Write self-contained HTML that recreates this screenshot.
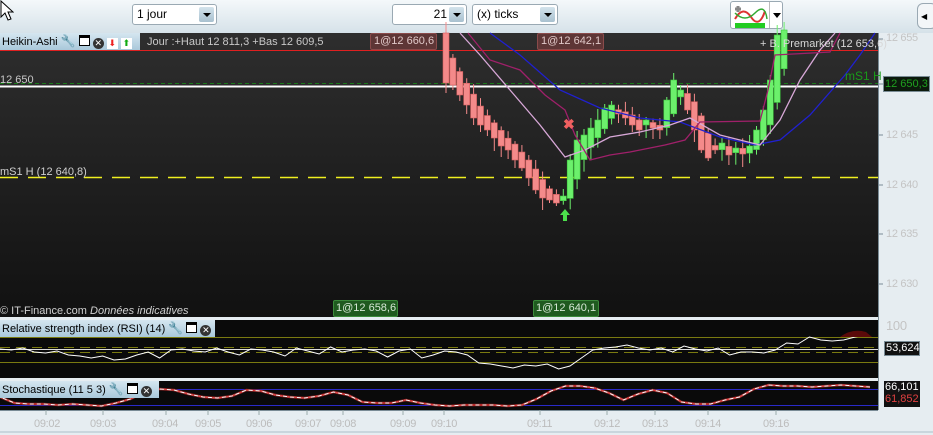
<!DOCTYPE html>
<html><head><meta charset="utf-8"><style>
*{margin:0;padding:0;box-sizing:border-box}
body{width:933px;height:435px;overflow:hidden;background:#e6edf1;font-family:"Liberation Sans",sans-serif;position:relative}
.tb{position:absolute;left:0;top:0;width:933px;height:33px;background:linear-gradient(#f4f8fa,#d6e2e9)}
.dd{position:absolute;height:21px;background:#fff;border:1px solid #9aa9b3;border-radius:3px;font-size:12px;line-height:19px;padding-left:4px;color:#000}
.dd b{position:absolute;right:2px;top:2px;width:15px;height:15px;background:linear-gradient(#d3e3ec,#a9c1cf);border-radius:2px}
.dd b:after{content:"";position:absolute;left:4px;top:6px;border-left:4px solid transparent;border-right:4px solid transparent;border-top:4px solid #000}
.t{position:absolute;white-space:nowrap;font-size:11px}
.lbl{position:absolute;background:linear-gradient(#d5e6f0,#a9c8da);color:#000;font-size:11px;line-height:16px;padding-left:2px;white-space:nowrap}
.ax{position:absolute;font-size:11px;color:#c4c4c4;letter-spacing:-0.3px}
.tm{position:absolute;top:418px;font-size:11px;color:#bcbcbc;letter-spacing:-0.3px}
</style></head><body>
<div class="tb"></div>
<svg style="position:absolute;left:0;top:0" width="14" height="22"><path d="M1 1 L1 17 L5 13 L8 20 L11 19 L8 12 L13 12 Z" fill="#fff" stroke="#000" stroke-width="1"/></svg>
<div class="dd" style="left:132px;top:4px;width:85px">1 jour<b></b></div>
<div class="dd" style="left:392px;top:4px;width:75px;text-align:right;padding-right:19px">21<b></b></div>
<div class="dd" style="left:472px;top:4px;width:86px">(x) ticks<b></b></div>
<div style="position:absolute;left:730px;top:1px;width:53px;height:28px;background:#fff;border:1px solid #9aa9b3;border-radius:3px">
<svg width="36" height="26" style="position:absolute;left:2px;top:1px"><rect x="2" y="20" width="30" height="5" fill="#2c2"/><path d="M2 16 Q10 2 18 14 T32 8" stroke="#d33" fill="none" stroke-width="2"/><path d="M2 10 Q12 20 22 10 T34 16" stroke="#3a3" fill="none" stroke-width="1.5"/><path d="M2 6 h6 M5 3 v6" stroke="#888" stroke-width="3"/></svg>
<div style="position:absolute;left:38px;top:0;width:1px;height:26px;background:#bbb"></div>
<div style="position:absolute;left:42px;top:11px;border-left:4px solid transparent;border-right:4px solid transparent;border-top:5px solid #000"></div></div>
<div style="position:absolute;left:917px;top:3px;width:20px;height:26px;background:#f3f6f8;border:1px solid #9aa9b3;border-radius:6px"><span style="position:absolute;left:3px;top:8px;font-size:8px">◀</span></div>

<div style="position:absolute;left:0;top:33px;width:878px;height:284px;background:linear-gradient(#2e2e2e,#111)"></div>
<div style="position:absolute;left:0;top:320px;width:878px;height:58px;background:#0a0a0a"></div>
<div style="position:absolute;left:0;top:381px;width:878px;height:29px;background:#0a0a0a"></div>
<div style="position:absolute;left:878px;top:33px;width:1px;height:377px;background:#7a8c96"></div>
<div style="position:absolute;left:0;top:410px;width:878px;height:1px;background:#7a8c96"></div>
<div style="position:absolute;left:0;top:431px;width:933px;height:2px;background:#c9d6dd"></div>

<svg id="s" width="933" height="435" style="position:absolute;left:0;top:0"></svg>

<div class="lbl" style="left:0;top:33px;width:140px">Heikin-Ashi <span style="font-size:12px">🔧</span>
<span style="display:inline-block;width:11px;height:11px;background:#fff;border:1px solid #000;border-top:3px solid #000;vertical-align:-1px"></span>
<span style="display:inline-block;width:11px;height:11px;background:#333;border-radius:50%;color:#fff;font-size:9px;line-height:11px;text-align:center;vertical-align:-1px">✕</span>
<span style="display:inline-block;width:11px;height:11px;background:#fff;color:#e22;font-size:9px;line-height:11px;text-align:center;vertical-align:-1px">⬇</span>
<span style="display:inline-block;width:11px;height:11px;background:#fff;color:#1a1;font-size:9px;line-height:11px;text-align:center;vertical-align:-1px">⬆</span></div>
<div class="t" style="left:147px;top:36px;color:#c8c8c8;font-size:11px">Jour :+Haut 12 811,3 +Bas 12 609,5</div>
<div class="t" style="left:370px;top:33px;width:67px;height:17px;background:#5e3636;border:1px solid #8a4b4b;border-radius:2px;color:#e0c8c8;line-height:15px;padding-left:3px">1@12 660,6</div>
<div class="t" style="left:537px;top:33px;width:67px;height:17px;background:#5e3636;border:1px solid #8a4b4b;border-radius:2px;color:#e0c8c8;line-height:15px;padding-left:3px">1@12 642,1</div>
<div class="t" style="left:760px;top:38px;color:#d8d8d8">+ B. Premarket (12 653,6)</div>
<div class="t" style="left:0;top:74px;color:#c8c8c8">12 650</div>
<div class="t" style="left:845px;top:69px;color:#1a9a1a;font-size:12px">mS1 H</div>
<div class="t" style="left:0;top:166px;color:#d0d0d0">mS1 H (12 640,8)</div>
<div class="t" style="left:0;top:305px;color:#d0d0d0">© IT-Finance.com <i>Données indicatives</i></div>
<div class="t" style="left:333px;top:300px;width:65px;height:17px;background:#1f5a1f;border:1px solid #3a8a3a;border-radius:2px;color:#d6e8d6;line-height:15px;padding-left:2px">1@12 658,6</div>
<div class="t" style="left:533px;top:300px;width:66px;height:17px;background:#1f5a1f;border:1px solid #3a8a3a;border-radius:2px;color:#d6e8d6;line-height:15px;padding-left:2px">1@12 640,1</div>

<div class="lbl" style="left:0;top:320px;width:215px">Relative strength index (RSI) (14) <span style="font-size:12px">🔧</span> <span style="display:inline-block;width:11px;height:11px;background:#fff;border:1px solid #000;border-top:3px solid #000;vertical-align:-1px"></span> <span style="display:inline-block;width:11px;height:11px;background:#333;border-radius:50%;color:#fff;font-size:9px;line-height:11px;text-align:center;vertical-align:-1px">✕</span></div>
<div class="lbl" style="left:0;top:381px;width:159px">Stochastique (11 5 3) <span style="font-size:12px">🔧</span> <span style="display:inline-block;width:11px;height:11px;background:#fff;border:1px solid #000;border-top:3px solid #000;vertical-align:-1px"></span> <span style="display:inline-block;width:11px;height:11px;background:#333;border-radius:50%;color:#fff;font-size:9px;line-height:11px;text-align:center;vertical-align:-1px">✕</span></div>

<div class="ax" style="left:886px;top:32px">12 655</div>
<div class="ax" style="left:886px;top:129px">12 645</div>
<div class="ax" style="left:886px;top:179px">12 640</div>
<div class="ax" style="left:886px;top:228px">12 635</div>
<div class="ax" style="left:886px;top:278px">12 630</div>
<div class="t" style="left:883px;top:76px;width:47px;height:16px;background:#0c1a0c;border:1px solid #7a8c96;color:#1fa01f;font-size:11px;line-height:14px;padding-left:1px">12 650,3</div>
<div class="ax" style="left:886px;top:318px;font-size:13px">100</div>
<div class="t" style="left:884px;top:341px;width:36px;height:15px;background:#111;border:1px solid #7a8c96;color:#fff;font-size:11px;line-height:13px;padding-left:1px">53,624</div>
<div class="t" style="left:884px;top:381px;width:36px;height:12px;background:#111;color:#fff;font-size:11px;line-height:12px;padding-left:1px">66,101</div>
<div class="t" style="left:884px;top:393px;width:36px;height:14px;background:#111;color:#e04040;font-size:11px;line-height:13px;padding-left:1px">61,852</div>

<div class="tm" style="left:34px">09:02</div><div class="tm" style="left:90px">09:03</div><div class="tm" style="left:152px">09:04</div><div class="tm" style="left:195px">09:05</div><div class="tm" style="left:246px">09:06</div><div class="tm" style="left:295px">09:07</div><div class="tm" style="left:330px">09:08</div><div class="tm" style="left:390px">09:09</div><div class="tm" style="left:431px">09:10</div><div class="tm" style="left:527px">09:11</div><div class="tm" style="left:594px">09:12</div><div class="tm" style="left:642px">09:13</div><div class="tm" style="left:695px">09:14</div><div class="tm" style="left:763px">09:16</div>

<script>
var s=document.getElementById('s'),h='';
function L(x1,y1,x2,y2,c,w,d){h+='<line x1="'+x1+'" y1="'+y1+'" x2="'+x2+'" y2="'+y2+'" stroke="'+c+'" stroke-width="'+(w||1)+'"'+(d?' stroke-dasharray="'+d+'"':'')+'/>';}
function P(pts,c,w,d){h+='<polyline points="'+pts+'" fill="none" stroke="'+c+'" stroke-width="'+(w||1)+'"'+(d?' stroke-dasharray="'+d+'"':'')+'/>';}
L(0,50.5,878,50.5,'#e02020',1);
L(0,83.5,878,83.5,'#1a7a1a',1,'4 3');
L(0,86.5,878,86.5,'#fff',2);
L(0,177.5,878,177.5,'#f0f020',1.5,'18 10');
var c=[83,85,95,105,118,125,130,138,146,150,160,168,178,190,198,200,203,198,160,140,135,128,120,108,105,112,118,125,130,120,128,130,100,80,90,110,130,150,158,150,145,155,150,152,148,130,110,80,35,30];
var o=33,r=7;
for(var i=0;i<c.length;i++){var x=443+i*6.9,cl=c[i],g=cl<o,t=Math.min(o,cl),b=Math.max(o,cl);if(b-t<4){t-=2;b+=2}
var col=g?'#6cf06c':'#f48a8a',bc=g?'#3cc83c':'#d86060';
r=(r*37+11)%23;var hi=t-(r%9)-3,lo=b+((r*3)%11)+3;
L(x+3,hi,x+3,lo,col,1);
h+='<rect x="'+x+'" y="'+t+'" width="6" height="'+(b-t)+'" fill="'+col+'" stroke="'+bc+'" stroke-width="0.6"/>';
o=(o+cl)/2;}
P('490,33 520,55 560,90 600,108 640,118 680,122 720,137 755,145 780,140 810,115 845,75 860,55 875,33','#2020d0',1.3);
P('460,33 480,55 510,90 540,125 565,157 585,150 610,137 640,132 670,125 690,118 720,135 760,145 780,120 800,80 820,50 835,33','#d8a8d8',1.3);
P('468,33 490,60 520,70 545,95 565,110 575,135 590,160 610,155 630,152 650,148 665,145 685,140 700,122 760,121 768,90 775,55 830,52 840,33','#a0206a',1.3);
h+='<text x="563" y="129" fill="#f06060" font-size="14" font-weight="bold" font-family="Liberation Sans">✖</text>';
h+='<path d="M560 215 L565 209 L570 215 L567 215 L567 221 L563 221 L563 215 Z" fill="#4ce04c"/>';
L(0,337.5,878,337.5,'#7a7a10',1);L(0,362.5,878,362.5,'#7a7a10',1);
L(0,347.5,878,347.5,'#7a7a10',1,'10 6');L(0,352.5,878,352.5,'#7a7a10',1,'10 6');
L(0,349.5,878,349.5,'#ddd',1);
var rs=[349,350,348,352,353,351,355,356,358,356,360,359,355,352,358,350,349,351,352,348,352,355,349,350,352,356,348,351,354,347,352,350,349,351,357,351,349,358,355,351,352,355,363,364,366,368,365,366,364,369,366,358,350,348,347,345,348,350,348,352,346,349,351,348,355,352,352,353,350,343,344,337,340,341,340,337,335];
var p='';for(var i=0;i<rs.length;i++)p+=(i*11.4)+','+rs[i]+' ';P(p,'#fff',1);
h+='<path d="M840 337 Q852 328 866 332 L872 337 Z" fill="#5a0a0a"/>';
L(0,389.5,878,389.5,'#2a2ac8',1);L(0,405.5,878,405.5,'#2a2ac8',1);
var st=[397,403,404,404,405,404,405,406,403,399,392,389,390,394,397,398,396,390,391,395,397,398,396,392,395,402,403,403,400,403,405,406,405,405,405,406,405,399,391,386,386,388,393,400,394,390,393,402,404,404,400,397,389,385,386,386,387,386,385,386,387];
p='';for(var i=0;i<st.length;i++)p+=(i*14.5)+','+st[i]+' ';P(p,'#8a2020',2.5);P(p,'#fff',1);P(p,'#e03030',1,'3 4');
[39,135,185,234,284,84].forEach(function(y){L(878,y,883,y,'#7a8c96',1)});
[46,103,166,208,259,307,343,403,444,540,607,655,708,776].forEach(function(x){L(x,410,x,415,'#9aa',1)});
s.innerHTML=h;
</script>
</body></html>
